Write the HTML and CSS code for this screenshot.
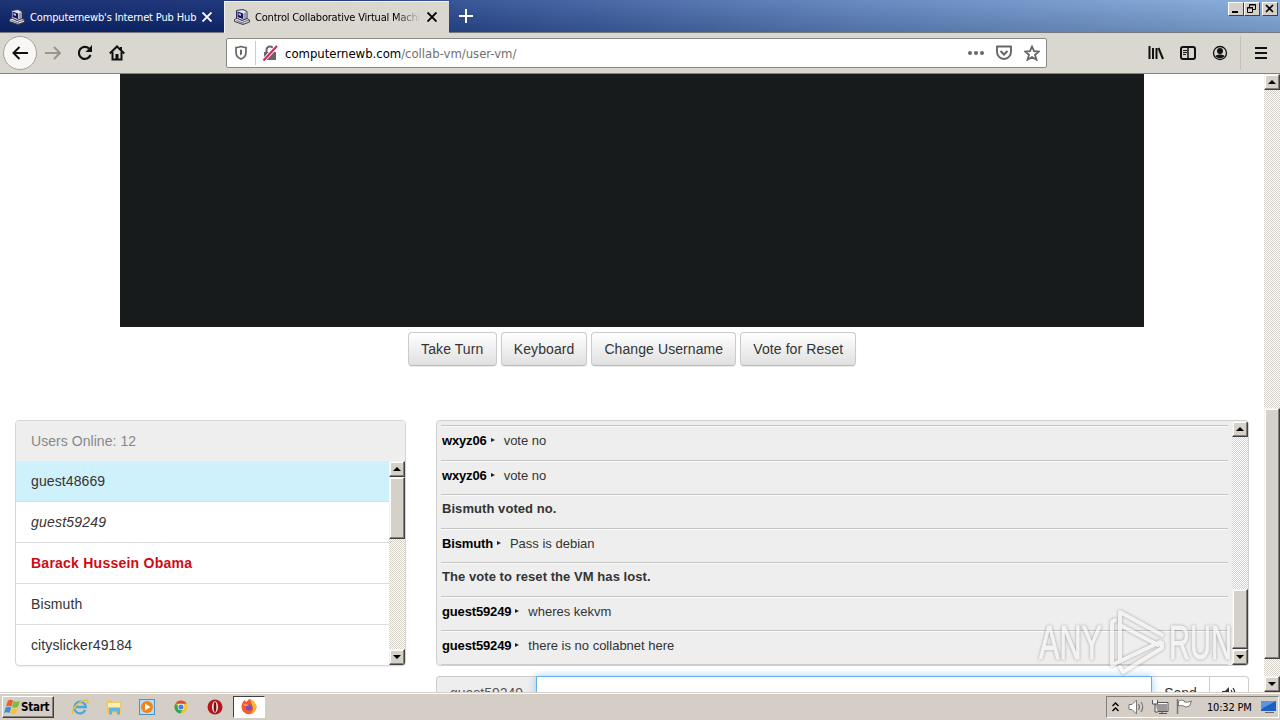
FILE: index.html
```
<!DOCTYPE html>
<html lang="en">
<head>
    <meta charset="UTF-8">
    <title>Control Collaborative Virtual Machines</title>
    <link rel="stylesheet" href="styles.css">
</head>
<body>

    <!-- Shared shapes -->
    <svg class="defs" width="0" height="0">
        <symbol id="pc" viewBox="0 0 16 16">
            <path d="M2.500 1.500 9 .5l4 2v7l-5 2-5.500-2z" fill="#e4e2ee" stroke="#333347"/>
            <path d="M3.500 2.500l5.500 2v5.500L3.500 8z" fill="#17136b"/>
            <path d="M4.500 4l2.500 1v2L4.500 6z" fill="#b9c4ff"/>
            <path d="M9.500 4.500 12.500 3v6l-3 1.500z" fill="#9d9bab"/>
            <path d="M.5 10.500 3 9l5 2.500 5-2 2.500 1.500v2L9 15.500.5 12.500z" fill="#d5d3e0" stroke="#3d3d4c"/>
            <path d="M2.500 11.500 8.500 13.800M9 15v-2l6-2" fill="none" stroke="#777586"/>
        </symbol>
        <symbol id="close" viewBox="0 0 10 10">
            <path d="M.5.5l9 9M9.500.5l-9 9" fill="none" stroke="currentColor" stroke-width="1.900"/>
        </symbol>
    </svg>

    <!-- Tabs -->
    <div class="titlebar">
        <div class="tab">
            <svg class="favicon"><use href="#pc"/></svg>
            <span class="tab-title">Computernewb's Internet Pub Hub</span>
            <svg class="tab-close"><use href="#close"/></svg>
        </div>
        <div class="tab active">
            <svg class="favicon"><use href="#pc"/></svg>
            <span class="tab-title fade">Control Collaborative Virtual Machi</span>
            <svg class="tab-close"><use href="#close"/></svg>
        </div>
        <svg class="new-tab" viewBox="0 0 14 14"><path d="M7 0v14M0 7h14" stroke="#fff" stroke-width="2"/></svg>
        <div class="window-buttons">
            <span class="win-btn"><svg viewBox="0 0 13 11"><path d="M3 9h6" stroke="#000" stroke-width="2"/></svg></span>
            <span class="win-btn"><svg viewBox="0 0 13 11"><path d="M4.500 4V1.500h6v5H8M4 2h7M2.500 4.500h5v5h-5zM2 5h6" fill="none" stroke="#000"/></svg></span>
            <span class="win-btn last"><svg viewBox="0 0 13 11"><path d="M3 2l7 7M10 2 3 9" stroke="#000" stroke-width="1.700"/></svg></span>
        </div>
    </div>

    <!-- Toolbar -->
    <div class="toolbar">
        <div class="nav">
            <span class="back"><svg width="18" height="16" viewBox="0 0 18 16"><path d="M17 8H3M8.500 2 2.500 8l6 6" fill="none" stroke="#111" stroke-width="2"/></svg></span>
            <svg width="16" height="16" viewBox="0 0 16 16"><path d="M0 8h14M9 2l6 6-6 6" fill="none" stroke="#99958f" stroke-width="2"/></svg>
            <svg width="16" height="16" viewBox="0 0 16 16"><path d="M13.500 10A6 6 0 1 1 12 3.500" fill="none" stroke="#111" stroke-width="2.200"/><path d="M15 0v7H8.500z" fill="#111"/></svg>
            <svg width="16" height="16" viewBox="0 0 16 16"><path d="M.8 8.500 8 1.500l7.200 7" fill="none" stroke="#111" stroke-width="2"/><path d="M3.500 7v7.500h9V7M12 2v3" fill="none" stroke="#111" stroke-width="2"/><path d="M6.500 9h3v6h-3z" fill="#111"/></svg>
        </div>
        <div class="urlbar">
            <svg class="shield" width="14" height="16" viewBox="0 0 14 16"><path d="M7 1.500c2 .8 3.500 1 5 1v4.500c0 3.500-2 6-5 7-3-1-5-3.500-5-7V2.500c1.500 0 3-.2 5-1z" fill="none" stroke="#666" stroke-width="1.700"/><path d="M6 4.500v6l2-1.500V5z" fill="#666"/></svg>
            <svg class="lock" viewBox="0 0 16 16"><path d="M2 7h12v8H2z" fill="#666"/><path d="M4.500 8V5a3.500 3.500 0 0 1 7 0v3" fill="none" stroke="#666" stroke-width="2"/><path d="M1 16 15 1" stroke="#fff" stroke-width="4"/><path d="M1.500 15.500 15 1" stroke="#e0225b" stroke-width="2.200"/></svg>
            <span class="url"><b>computernewb.com</b>/collab-vm/user-vm/</span>
            <svg width="16" height="16" viewBox="0 0 16 16"><g fill="#666"><circle cx="2" cy="8" r="2"/><circle cx="8" cy="8" r="2"/><circle cx="14" cy="8" r="2"/></g></svg>
            <svg width="16" height="16" viewBox="0 0 16 16"><path d="M1 1.500h14v5.500a7 7 0 0 1-14 0z" fill="none" stroke="#666" stroke-width="1.900" stroke-linejoin="round"/><path d="M4.500 6 8 9.500 11.500 6" fill="none" stroke="#666" stroke-width="2"/></svg>
            <svg width="16" height="16" viewBox="0 0 16 16"><path d="M8 1.500l2 4.700 5 .3-4 3.200 1.500 5L8 12l-4.500 2.700 1.500-5-4-3.200 5-.3z" fill="none" stroke="#666" stroke-width="1.800"/></svg>
        </div>
        <div class="tools">
            <svg width="16" height="16" viewBox="0 0 16 16"><path d="M1.500 1v13M5 3v11M8.500 3v11M10.500 3l4.500 11" stroke="#111" stroke-width="2"/></svg>
            <svg width="16" height="16" viewBox="0 0 16 16"><rect x="1" y="2" width="14" height="12" rx="2" fill="none" stroke="#111" stroke-width="2"/><path d="M8 2v12" stroke="#111" stroke-width="1.500"/><path d="M3 5.500h4M3 7.500h4M3 9.500h3" stroke="#111"/></svg>
            <svg width="16" height="16" viewBox="0 0 16 16"><circle cx="8" cy="8" r="6.500" fill="none" stroke="#111" stroke-width="1.300"/><circle cx="8" cy="6" r="3" fill="#111"/><path d="M3.500 11c2-2 7-2 9 0-2 3-7 3-9 0z" fill="#111"/></svg>
            <span class="divider"></span>
            <svg width="12" height="14" viewBox="0 0 12 14"><path d="M0 2h12M0 7h12M0 12h12" stroke="#111" stroke-width="2"/></svg>
        </div>
    </div>

    <!-- Page -->
    <div class="viewport">
        <div class="page">
            <div class="screen"></div>
            <div class="actions">
                <button>Take Turn</button>
                <button>Keyboard</button>
                <button>Change Username</button>
                <button>Vote for Reset</button>
            </div>
            <div class="columns">
                <div class="users">
                    <div class="users-heading">Users Online: 12</div>
                    <div class="users-body">
                        <ul>
                            <li class="turn">guest48669</li>
                            <li class="me">guest59249</li>
                            <li class="admin">Barack Hussein Obama</li>
                            <li>Bismuth</li>
                            <li>cityslicker49184</li>
                        </ul>
                        <div class="scrollbar">
                            <span class="arrow up"></span>
                            <span class="thumb users-thumb"></span>
                            <span class="arrow down"></span>
                        </div>
                    </div>
                </div>
                <div class="chat-column">
                    <div class="chat">
                        <div class="messages">
                            <div class="message"><b>wxyz06</b><i></i>vote no</div>
                            <div class="message"><b>wxyz06</b><i></i>vote no</div>
                            <div class="message notice">Bismuth voted no.</div>
                            <div class="message"><b>Bismuth</b><i></i>Pass is debian</div>
                            <div class="message notice">The vote to reset the VM has lost.</div>
                            <div class="message"><b>guest59249</b><i></i>wheres kekvm</div>
                            <div class="message"><b>guest59249</b><i></i>there is no collabnet here</div>
                        </div>
                        <div class="scrollbar">
                            <span class="arrow up"></span>
                            <span class="thumb chat-thumb"></span>
                            <span class="arrow down"></span>
                        </div>
                    </div>
                    <div class="chat-input">
                        <span class="addon">guest59249</span>
                        <input type="text">
                        <span class="send">Send</span>
                        <span class="sound"><svg width="14" height="14" viewBox="0 0 14 14"><path d="M0 5h3l4-4v12L3 9H0z" fill="#333"/><path d="M9 4q2 3 0 6M11 2q3.500 5 0 10" fill="none" stroke="#333" stroke-width="1.300"/></svg></span>
                    </div>
                </div>
            </div>
        </div>
        <div class="scrollbar">
            <span class="arrow up"></span>
            <span class="thumb page-thumb"></span>
            <span class="arrow down"></span>
        </div>
    </div>

    <!-- Taskbar -->
    <div class="taskbar">
        <div class="start">
            <svg width="16" height="16" viewBox="0 0 16 16"><path d="M4 1.500q3-1.500 5 0L7.500 7.500q-3-1.500-5.500 0z" fill="#e8602c"/><path d="M9.500 2q3 1.500 6.500 0L14 8q-3 1.500-6 0z" fill="#7dbb42"/><path d="M1.700 8.500q3-1.500 5.500 0L5.500 14q-3-1.500-5.500 0z" fill="#3c8ed8"/><path d="M7.800 9q3 1.500 6 0l-1.500 5.500q-3 1.500-6 0z" fill="#f6c52f"/></svg>
            Start
        </div>
        <div class="apps">
            <svg width="18" height="18" viewBox="0 0 18 18"><path d="M14.300 12a5.800 5.800 0 1 1 .5-3H5" fill="none" stroke="#45a9dc" stroke-width="2.300"/><path d="M2 16C-1 13 8 2 16 2q2 .5 0 4" fill="none" stroke="#edbd3c" stroke-width="1.500"/></svg>
            <svg width="18" height="18" viewBox="0 0 18 18"><path d="M1.500 2h5l1 2h9v11h-15z" fill="#ecc868"/><path d="M3 5h12v4H3z" fill="#fff0b2"/><path d="M4 16.500v-6.500h11v6.500h-3v-3H7v3z" fill="#63b5df"/></svg>
            <svg width="18" height="18" viewBox="0 0 18 18"><rect x="1.500" y="1.500" width="15" height="15" fill="#b8dcf5" stroke="#4d91c6"/><circle cx="9" cy="9" r="6" fill="#ef8519"/><path d="M7 5.500v7L12.500 9z" fill="#fff"/></svg>
            <svg width="18" height="18" viewBox="0 0 18 18"><circle cx="9" cy="9" r="6.500" fill="#f4c62b"/><path d="M3.400 5.700A6.500 6.500 0 0 0 8.500 15.500L11 11z" fill="#2fa45b"/><path d="M3.400 5.700A6.500 6.500 0 0 1 14.600 5.700H9z" fill="#dc4a38"/><circle cx="9" cy="9" r="3.300" fill="#fff"/><circle cx="9" cy="9" r="2.600" fill="#4284d8"/></svg>
            <svg width="18" height="18" viewBox="0 0 18 18"><circle cx="9" cy="9" r="7.500" fill="#b3161b"/><ellipse cx="9" cy="9" rx="3" ry="5.800" fill="#e9e2de"/><ellipse cx="9" cy="9" rx="1.300" ry="5" fill="#7d0b12"/></svg>
            <span class="running"><svg width="18" height="18" viewBox="0 0 18 18"><path d="M3 4l1.500-2L6 4q2-1 3-3 5 1 7.500 7.500A7.500 7.500 0 1 1 1.500 9Q1.500 6 3 4z" fill="#f6572e"/><path d="M10 1q5 2 6.500 7.500-1 7-7 7.500 5-3 3-8z" fill="#fdbb2d"/><circle cx="8.800" cy="9.500" r="3" fill="#7750c5"/><path d="M3 6q4-1 6 1.500l-4 1z" fill="#fc942e"/></svg></span>
        </div>
        <div class="tray">
            <svg width="7" height="10" viewBox="0 0 7 10"><path d="M.5 4l3-3 3 3M.5 9l3-3 3 3" fill="none" stroke="#000" stroke-width="1.400"/></svg>
            <svg width="18" height="18" viewBox="0 0 18 18"><path d="M1 6.500h3L8.500 2v14L4 11.500H1z" fill="#fff" stroke="#777"/><path d="M10.500 6q2 3 0 6M13 4q3.500 5 0 10" fill="none" stroke="#777" stroke-width="1.200"/></svg>
            <svg width="18" height="18" viewBox="0 0 18 18"><path d="M4.500 5.500h11v8h-11z" fill="#999" stroke="#fff"/><path d="M4 4.500h12v9H4zM7 15.500h8M10 13v3" fill="none" stroke="#555"/><path d="M.5 2v4h5V2M3 6v8h3" fill="#eee" stroke="#555"/></svg>
            <svg width="18" height="18" viewBox="0 0 18 18"><path d="M2.500 3q3-2 6 0v1q3 1 7-1l-2 5q-4 2-6 0-3-1-5 0z" fill="#fff" stroke="#777"/><path d="M1.500 1v15" stroke="#777" stroke-width="1.500"/></svg>
            <span class="clock">10:32 PM</span>
            <svg width="16" height="14" viewBox="0 0 16 14"><path d="M1 1h15v10H1z" fill="#1f5fc2"/><path d="M1 1h15L3 8l-2 2z" fill="#5a96e0"/><path d="M5 12.500h9" stroke="#666"/></svg>
        </div>
    </div>

    <!-- Watermark -->
    <svg class="watermark" width="200" height="70" viewBox="0 0 200 70">
        <g class="mark-text">
            <text x="3" y="53" textLength="63" lengthAdjust="spacingAndGlyphs">ANY</text>
            <text x="133" y="53" textLength="63" lengthAdjust="spacingAndGlyphs">RUN</text>
        </g>
        <g class="mark-logo">
            <path d="M79 14 76 16V59L124 36M84 53V6L126 29"/>
            <path d="M84 19 122 39M84 61 87 66 126 42V37"/>
        </g>
    </svg>

</body>
</html>
```
FILE: styles.css
```
* {
    margin: 0;
    padding: 0;
    box-sizing: border-box;
}

body {
    width: 1280px;
    height: 720px;
    overflow: hidden;
    display: flex;
    flex-direction: column;
    position: relative;
    background: #fff;
    color: #333;
    font-family: "Liberation Sans", Arial, sans-serif;
    font-size: 14px;
}

svg {
    display: block;
    flex: none;
}

.defs {
    display: none;
}

/* Tabs */
.titlebar {
    height: 33px;
    flex: none;
    display: flex;
    background: linear-gradient(rgba(255, 255, 255, 0.08), rgba(0, 0, 0, 0.12)), linear-gradient(90deg, #0b246b 0, #112c76 330px, #2a4a90 460px, #5b80bb 850px, #83aadb 1280px);
    border-bottom: 1px solid #77797c;
    font-family: "DejaVu Sans Condensed", Tahoma, sans-serif;
    font-size: 11px;
}

.tab {
    width: 224px;
    height: 33px;
    padding: 1px 11px 0 9px;
    display: flex;
    align-items: center;
    color: #fff;
}

.tab.active {
    width: 225px;
    height: 32px;
    margin-top: 1px;
    padding-top: 0;
    background: #dad6d0;
    border-left: 1px solid #f4f2ef;
    border-top: 1px solid #f4f2ef;
    color: #000;
}

.favicon {
    width: 16px;
    height: 16px;
    margin-right: 5px;
}

.tab-title {
    width: 167px;
    margin-right: 5px;
    white-space: nowrap;
    letter-spacing: -0.14px;
}

.tab.active .tab-title {
    letter-spacing: -0.2px;
}

.fade {
    -webkit-mask-image: linear-gradient(90deg, #000 140px, transparent 166px);
    mask-image: linear-gradient(90deg, #000 140px, transparent 166px);
}

.tab-close {
    width: 10px;
    height: 10px;
}

.tab.active .favicon,
.tab.active .tab-title,
.tab.active .tab-close {
    margin-top: -1px;
}

.new-tab {
    width: 14px;
    height: 14px;
    margin: 9px 0 0 10px;
}

.window-buttons {
    margin: 2px 2px 0 auto;
    display: flex;
}

.win-btn {
    width: 16px;
    height: 14px;
    background: #d5d1c9;
    border: 1px solid;
    border-color: #fff #404040 #404040 #fff;
}

.win-btn svg {
    width: 13px;
    height: 11px;
}

.win-btn.last {
    margin-left: 2px;
}

/* Toolbar */
.toolbar {
    height: 41px;
    flex: none;
    display: flex;
    align-items: center;
    background: #dad6d0;
    border-bottom: 1px solid #85837f;
}

.nav {
    width: 226px;
    padding-left: 3px;
    display: flex;
    align-items: center;
    gap: 16px;
}

.back {
    width: 34px;
    height: 34px;
    margin-right: -8px;
    display: flex;
    align-items: center;
    justify-content: center;
    background: #f8f7f6;
    border: 1px solid #a5a29d;
    border-radius: 50%;
}

.urlbar {
    width: 821px;
    height: 30px;
    padding: 0 6px 0 7px;
    display: flex;
    align-items: center;
    gap: 12px;
    background: #fff;
    border: 1px solid #8b8985;
    border-radius: 2px;
}

.lock {
    width: 24px;
    height: 24px;
    margin-left: -5px;
    margin-right: -6px;
    padding: 4px 1px 4px 6px;
    border-left: 1px solid #ccc;
}

.url {
    flex: 1;
    font-family: "DejaVu Sans Condensed", Tahoma, sans-serif;
    font-size: 13px;
    letter-spacing: -0.02px;
    color: #707070;
}

.url b {
    color: #000;
    font-weight: normal;
}

.tools {
    margin-left: auto;
    padding-right: 13px;
    display: flex;
    align-items: center;
    gap: 16px;
}

.divider {
    width: 1px;
    height: 34px;
    margin: 0 -2px 0 -4px;
    background: #c4c0ba;
}

/* Page */
.viewport {
    height: 618px;
    flex: none;
    display: flex;
    overflow: hidden;
}

.page {
    flex: 1;
    overflow: hidden;
}

.screen {
    width: 1024px;
    height: 253px;
    margin-left: 120px;
    background: #181b1c;
    border-bottom: 4px solid #1b1919;
}

.actions {
    margin-top: 5px;
    display: flex;
    justify-content: center;
    gap: 4px;
}

.actions button {
    height: 34px;
    padding: 0 12px;
    background: linear-gradient(#fff, #e0e0e0);
    border: 1px solid #ccc;
    border-bottom-color: #bbb;
    border-radius: 4px;
    box-shadow: 0 1px 1px rgba(0, 0, 0, 0.08);
    font: 14px "Liberation Sans", Arial, sans-serif;
    letter-spacing: 0.09px;
    color: #333;
}

.actions button:first-child {
    width: 89px;
}

.columns {
    margin-top: 54px;
    padding: 0 15px;
    display: flex;
    gap: 30px;
}

/* Users list */
.users {
    width: 391px;
    height: 246px;
    border: 1px solid #d6d6d6;
    border-radius: 4px;
    box-shadow: 0 1px 1px rgba(0, 0, 0, 0.05);
    overflow: hidden;
}

.users-heading {
    height: 40px;
    padding-left: 15px;
    line-height: 40px;
    background: #eee;
    color: #888;
    letter-spacing: 0.05px;
}

.users-body {
    height: 204px;
    display: flex;
}

.users ul {
    flex: 1;
    list-style: none;
}

.users li {
    height: 41px;
    padding-left: 15px;
    line-height: 40px;
    border-bottom: 1px solid #ddd;
    letter-spacing: 0.1px;
}

.users li:last-child {
    height: 40px;
    border-bottom: none;
}

.users .turn {
    background: #cff1fc;
}

.users .me {
    font-style: italic;
    letter-spacing: 0.2px;
}

.users .admin {
    color: #d00b12;
    font-weight: bold;
    letter-spacing: 0.24px;
}

/* Chat */
.chat-column {
    width: 813px;
    flex: none;
}

.chat {
    height: 246px;
    padding-left: 4px;
    display: flex;
    background: #eee;
    border: 1px solid #d0d0d0;
    border-radius: 4px;
    overflow: hidden;
}

.messages {
    width: 787px;
    margin: 4px 4px 0 0;
    border-bottom: 1px solid #ccc;
    flex: none;
    height: 240px;
}

.message {
    height: 34px;
    padding-left: 1px;
    display: flex;
    line-height: 29px;
    font-size: 13px;
    border-top: 1px solid #c4c4c4;
    box-shadow: inset 0 1px #fafafa;
}

.message:first-child {
    height: 35px;
}

.message b {
    color: #000;
    letter-spacing: -0.15px;
}

.message i {
    align-self: flex-start;
    width: 4px;
    height: 0;
    margin: 12px 9px 0 4px;
    border: 2px solid transparent;
    border-left: 4px solid #222;
    border-right: 0;
}

.notice {
    font-weight: bold;
    line-height: 28px;
    letter-spacing: 0.06px;
}

.chat-input {
    height: 34px;
    margin-top: 10px;
    display: flex;
}

.addon,
.send,
.sound {
    display: flex;
    align-items: center;
    justify-content: center;
    border: 1px solid #ccc;
}

.addon {
    width: 100px;
    background: #eee;
    border-right: none;
    border-radius: 4px 0 0 4px;
    color: #555;
}

.chat-input input {
    width: 616px;
    border: 1px solid #66afe9;
    box-shadow: 0 0 8px rgba(102, 175, 233, 0.6);
    outline: none;
    z-index: 1;
}

.send {
    width: 58px;
    border-left: none;
}

.sound {
    width: 39px;
    border-left: none;
    border-radius: 0 4px 4px 0;
}

/* Classic scrollbars */
.scrollbar {
    width: 16px;
    flex: none;
    display: flex;
    flex-direction: column;
    background: repeating-conic-gradient(#fff 0 25%, #d5d1c9 0 50%) 0 0 / 2px 2px;
}

.arrow,
.thumb {
    flex: none;
    background: #d5d1c9;
    border: 1px solid;
    border-color: #f4f2ed #404040 #404040 #f4f2ed;
    box-shadow: inset -1px -1px #858179, inset 1px 1px #fff;
}

.arrow {
    height: 16px;
    display: flex;
    align-items: center;
    justify-content: center;
}

.arrow::before {
    content: "";
    border: 4px solid transparent;
}

.up::before {
    border-top: 0;
    border-bottom-color: #000;
}

.down::before {
    border-bottom: 0;
    border-top-color: #000;
}

.down {
    margin-top: auto;
}

.users-thumb {
    height: 62px;
}

.chat-thumb {
    height: 60px;
    margin-top: 152px;
}

.page-thumb {
    height: 251px;
    margin-top: 318px;
}

/* Taskbar */
.taskbar {
    height: 28px;
    flex: none;
    padding: 1px 1px 0 2px;
    display: flex;
    align-items: center;
    background: #d5cec6;
    border-top: 1px solid #d5cec6;
    box-shadow: inset 0 1px #fff;
    font-family: "DejaVu Sans Condensed", Tahoma, sans-serif;
    font-size: 11px;
    color: #000;
}

.start {
    width: 52px;
    height: 22px;
    padding-left: 1px;
    display: flex;
    align-items: center;
    gap: 1px;
    border: 1px solid;
    border-color: #fff #404040 #404040 #fff;
    box-shadow: inset -1px -1px #858179;
    font-size: 11.500px;
    font-weight: bold;
    letter-spacing: -0.25px;
}

.apps {
    margin-left: 17px;
    display: flex;
    align-items: center;
    gap: 15.700px;
}

.running {
    width: 32px;
    height: 22px;
    margin-left: -6px;
    display: flex;
    align-items: center;
    justify-content: center;
    background: #fff;
    border: 1px solid;
    border-color: #404040 #fff #fff #404040;
}

.tray {
    width: 173px;
    height: 22px;
    margin-left: auto;
    padding: 0 2px 0 5px;
    display: flex;
    align-items: center;
    border: 1px solid;
    border-color: #858179 #fff #fff #858179;
}

.tray svg + svg {
    margin-left: 6px;
}

.tray svg:first-child {
    margin-right: 3px;
}

.clock {
    margin: 0 auto 0 13px;
    white-space: nowrap;
    letter-spacing: -0.2px;
}

/* Watermark */
.watermark {
    position: absolute;
    left: 1036px;
    top: 606px;
    opacity: 0.65;
    filter: drop-shadow(0 0 1.500px rgba(0, 0, 0, 0.5));
    z-index: 2;
}

.mark-text {
    fill: #f7f7f7;
    stroke: #f7f7f7;
    stroke-width: 1;
    font: 49px "Liberation Sans Narrow", "Liberation Sans", sans-serif;
}

.mark-logo {
    fill: none;
    stroke: #f7f7f7;
    stroke-width: 4;
    stroke-linecap: round;
    stroke-linejoin: round;
}
```
